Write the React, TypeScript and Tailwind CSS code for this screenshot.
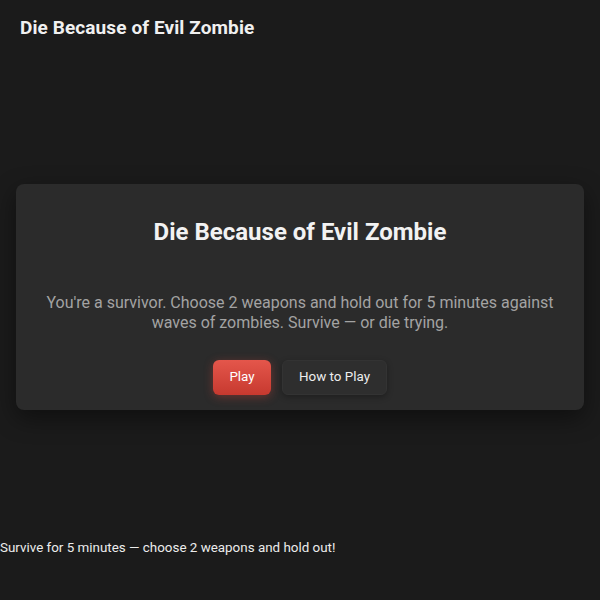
import { useState } from 'react';

// Title screen for the zombie survival game
export default function App() {
  const [showHelp, setShowHelp] = useState(false);

  return (
    <div
      className="min-h-[600px] bg-[#1b1b1b] text-[#ececec]"
      style={{ fontFamily: 'Roboto, "Liberation Sans", sans-serif' }}
    >
      {/* top bar */}
      <header className="flex h-14 items-center px-5">
        <h1 className="text-[19px] leading-7 font-bold tracking-[0.1px] text-[#f0f0f0]">
          Die Because of Evil Zombie
        </h1>
      </header>

      {/* menu card */}
      <main className="px-4 pt-[128px]">
        <div className="flex flex-col items-center rounded-lg bg-[#2b2b2b] px-5 pt-8 pb-[15px] shadow-[0_8px_24px_rgba(0,0,0,0.45)]">
          <h2 className="text-[24px] leading-8 font-bold text-[#f2f2f2]">Die Because of Evil Zombie</h2>
          <p className="mt-[45px] text-center text-[16px] leading-5 text-[#a3a3a3]">
            You're a survivor. Choose 2 weapons and hold out for 5 minutes against waves of zombies. Survive — or die
            trying.
          </p>
          <div className="mt-[27px] flex gap-[11px]">
            <button className="h-[35px] w-[58px] rounded-md bg-gradient-to-b from-[#e4564b] to-[#c7392f] text-[13.4px] text-white shadow-[0_2px_10px_rgba(229,72,60,0.35)]">
              Play
            </button>
            <button
              onClick={() => setShowHelp(!showHelp)}
              className="h-[35px] w-[105px] rounded-md border border-[#333] bg-[#2e2e2e] text-[13.4px] text-[#ededed] shadow-[0_2px_6px_rgba(0,0,0,0.3)]"
            >
              How to Play
            </button>
          </div>
        </div>
      </main>

      <p className="mt-[128px] text-[13.4px] leading-5 text-[#ececec]">
        Survive for 5 minutes — choose 2 weapons and hold out!
      </p>
    </div>
  );
}
